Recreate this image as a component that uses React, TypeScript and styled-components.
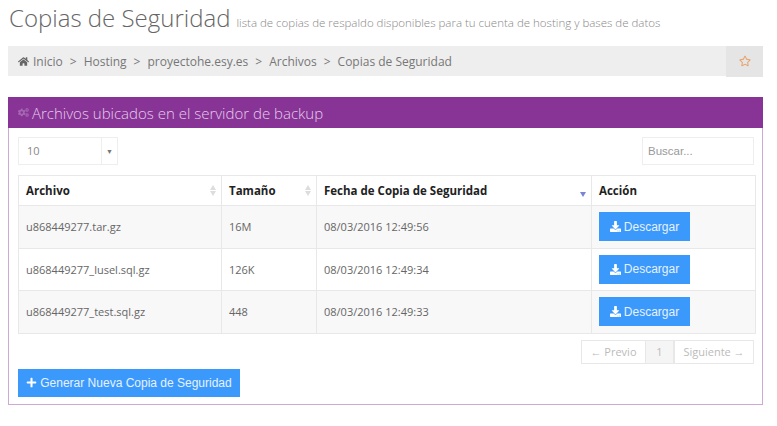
import styled, { createGlobalStyle } from "styled-components";
import { FaCogs, FaDownload, FaHome, FaPlus, FaRegStar } from "react-icons/fa";

const rows = [
  { file: "u868449277.tar.gz", size: "16M", date: "08/03/2016 12:49:56" },
  { file: "u868449277_lusel.sql.gz", size: "126K", date: "08/03/2016 12:49:34" },
  { file: "u868449277_test.sql.gz", size: "448", date: "08/03/2016 12:49:33" },
];

const crumbs = ["Hosting", "proyectohe.esy.es", "Archivos", "Copias de Seguridad"];

const GlobalStyle = createGlobalStyle`
  body {
    margin: 0;
    background: #fff;
    font-family: "Open Sans", sans-serif;
  }
`;

const Page = styled.div`
  width: 777px;
  height: 426px;
  padding: 0 14px 0 8px;
  box-sizing: border-box;
  overflow: hidden;
`;

const TitleRow = styled.div`
  display: flex;
  align-items: baseline;
  height: 46px;
  padding-left: 1px;
`;

const Title = styled.h1`
  margin: 0;
  font-size: 24px;
  line-height: 36px;
  font-weight: 300;
  color: #666;
`;

const Subtitle = styled.small`
  margin-left: 6px;
  font-size: 11.5px;
  font-weight: 300;
  color: #888;
`;

const Breadcrumb = styled.div`
  display: flex;
  align-items: center;
  height: 30px;
  background: #eee;
`;

const Crumbs = styled.div`
  flex: 1;
  display: flex;
  align-items: center;
  padding-left: 10px;
  font-size: 12px;
  color: #777;
`;

const Separator = styled.span`
  margin: 0 7px;
  font-size: 12px;
  color: #777;
`;

const StarBox = styled.div`
  width: 37px;
  height: 31px;
  display: flex;
  align-items: center;
  justify-content: center;
  background: #e5e5e5;
  color: #e8a26b;
  font-size: 12px;
`;

const Panel = styled.section`
  margin-top: 21px;
  height: 308px;
  box-sizing: border-box;
  border: 1px solid #cfa8d8;
  border-top: 0;
`;

const PanelHeader = styled.header`
  display: flex;
  align-items: center;
  gap: 3px;
  height: 31px;
  margin: 0 -1px;
  padding-left: 10px;
  background: #883497;
  color: #e4cde9;
  font-size: 15px;
  font-weight: 300;

  svg {
    color: #a566b2;
    font-size: 11px;
  }
`;

const PanelBody = styled.div`
  padding: 9px 8px 0 9px;
`;

const Controls = styled.div`
  display: flex;
  justify-content: space-between;
  height: 28px;
  margin-bottom: 10px;
`;

const SelectBox = styled.div`
  display: flex;
  width: 100px;
  box-sizing: border-box;
  border: 1px solid #eee;
  font-size: 11px;
  color: #888;
`;

const SelectValue = styled.span`
  flex: 1;
  padding-left: 8px;
  line-height: 26px;
`;

const SelectArrow = styled.span`
  width: 15px;
  border-left: 1px solid #eee;
  display: flex;
  align-items: center;
  justify-content: center;
  font-size: 7px;
  color: #777;
`;

const SearchBox = styled.div`
  width: 112px;
  box-sizing: border-box;
  border: 1px solid #eee;
  padding-left: 5px;
  font-family: "Liberation Sans", sans-serif;
  font-size: 11.5px;
  line-height: 26px;
  color: #999;
`;

const Table = styled.table`
  width: 737px;
  table-layout: fixed;
  border-collapse: collapse;
  border: 1px solid #e8e8e8;
  font-size: 11px;
  color: #666;
`;

const HeadCell = styled.th<{ $w: number }>`
  position: relative;
  width: ${(p) => p.$w}px;
  height: 30px;
  box-sizing: border-box;
  padding: 0 7px;
  border: 1px solid #e8e8e8;
  border-bottom-width: 1px;
  text-align: left;
  font-size: 11.5px;
  font-weight: 700;
  color: #222;
`;

const SortMark = styled.span<{ $active?: boolean }>`
  position: absolute;
  right: 5px;
  top: ${(p) => (p.$active ? 16 : 9)}px;
  display: flex;
  flex-direction: column;
  gap: 1px;

  &::before {
    content: "";
    display: ${(p) => (p.$active ? "none" : "block")};
    border: 3.5px solid transparent;
    border-top: 0;
    border-bottom: 5px solid #ddd;
  }

  &::after {
    content: "";
    display: block;
    border: 3.5px solid transparent;
    border-bottom: 0;
    border-top: 5px solid ${(p) => (p.$active ? "#7b83d6" : "#ddd")};
  }
`;

const Row = styled.tr<{ $odd: boolean }>`
  height: 42.5px;
  background: ${(p) => (p.$odd ? "#f8f8f8" : "#fff")};
`;

const Cell = styled.td`
  padding: 0 7px;
  border: 1px solid #e8e8e8;
`;

const ActionButton = styled.button`
  display: inline-flex;
  align-items: center;
  justify-content: center;
  gap: 3px;
  height: 29px;
  padding: 0;
  border: 0;
  background: #3b99fc;
  color: #e6f1ff;
  font-family: "Liberation Sans", sans-serif;
  font-size: 12px;

  svg {
    color: #fff;
    font-size: 11px;
  }
`;

const DownloadButton = styled(ActionButton)`
  width: 91px;
`;

const Pagination = styled.div`
  display: flex;
  justify-content: flex-end;
  height: 24px;
  margin-top: 6px;
  font-size: 11px;
  color: #bbb;
`;

const PageItem = styled.span<{ $w: number; $current?: boolean }>`
  width: ${(p) => p.$w}px;
  box-sizing: border-box;
  border: 1px solid #e8e8e8;
  border-left-width: ${(p) => (p.$current ? 0 : 1)}px;
  background: ${(p) => (p.$current ? "#f5f5f5" : "#fff")};
  text-align: center;
  line-height: 22px;
  white-space: nowrap;
`;

const GenerateButton = styled(ActionButton)`
  width: 222px;
  height: 28px;
  margin-top: 5px;
`;

export default function App() {
  return (
    <Page>
      <GlobalStyle />
      <TitleRow>
        <Title>Copias de Seguridad</Title>
        <Subtitle>lista de copias de respaldo disponibles para tu cuenta de hosting y bases de datos</Subtitle>
      </TitleRow>
      <Breadcrumb>
        <Crumbs>
          <FaHome size={11} style={{ marginRight: 4, color: "#666" }} />
          Inicio
          {crumbs.map((c) => (
            <span key={c}>
              <Separator>&gt;</Separator>
              {c}
            </span>
          ))}
        </Crumbs>
        <StarBox>
          <FaRegStar />
        </StarBox>
      </Breadcrumb>
      <Panel>
        <PanelHeader>
          <FaCogs />
          Archivos ubicados en el servidor de backup
        </PanelHeader>
        <PanelBody>
          <Controls>
            <SelectBox>
              <SelectValue>10</SelectValue>
              <SelectArrow>▼</SelectArrow>
            </SelectBox>
            <SearchBox>Buscar...</SearchBox>
          </Controls>
          <Table>
            <thead>
              <tr>
                <HeadCell $w={203}>
                  Archivo
                  <SortMark />
                </HeadCell>
                <HeadCell $w={95}>
                  Tamaño
                  <SortMark />
                </HeadCell>
                <HeadCell $w={275}>
                  Fecha de Copia de Seguridad
                  <SortMark $active />
                </HeadCell>
                <HeadCell $w={164}>Acción</HeadCell>
              </tr>
            </thead>
            <tbody>
              {rows.map((r, i) => (
                <Row key={r.file} $odd={i % 2 === 0}>
                  <Cell>{r.file}</Cell>
                  <Cell>{r.size}</Cell>
                  <Cell>{r.date}</Cell>
                  <Cell>
                    <DownloadButton>
                      <FaDownload />
                      Descargar
                    </DownloadButton>
                  </Cell>
                </Row>
              ))}
            </tbody>
          </Table>
          <Pagination>
            <PageItem $w={65}>← Previo</PageItem>
            <PageItem $w={28} $current>
              1
            </PageItem>
            <PageItem $w={80}>Siguiente →</PageItem>
          </Pagination>
          <GenerateButton>
            <FaPlus />
            Generar Nueva Copia de Seguridad
          </GenerateButton>
        </PanelBody>
      </Panel>
    </Page>
  );
}
